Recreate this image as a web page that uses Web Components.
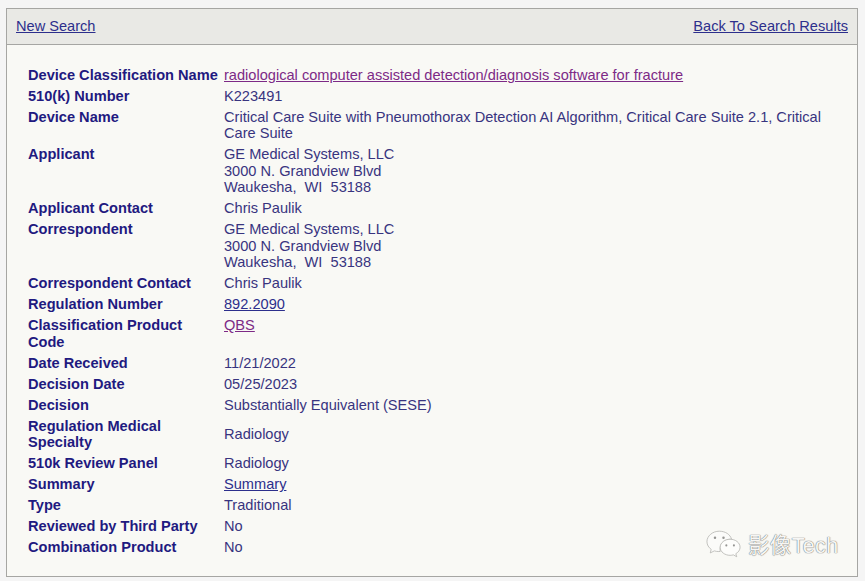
<!DOCTYPE html>
<html lang="en">
<head>
<meta charset="utf-8">
<title>510(k) Premarket Notification</title>
<style>
    html, body { margin: 0; height: 100%; }
    body {
        background: #f5f5f5;
        font-family: "Liberation Sans", Arial, sans-serif;
        color: #2e2a7e;
    }
</style>
</head>
<body>
<template id="result-panel-tpl">
    <style>
        :host {
            display: block;
            box-sizing: border-box;
            width: 852px;
            height: 569px;
            margin: 8px 0 0 6px;
            border: 1px solid #a6a6a3;
            background: #f9f9f5;
            position: relative;
        }
        .bar {
            display: flex;
            justify-content: space-between;
            align-items: center;
            box-sizing: border-box;
            height: 36px;
            padding: 0 9px 2px;
            background: #e9e9e5;
            border-bottom: 1px solid #a6a6a3;
            font-size: 14.6px;
        }
        .rows {
            display: flex;
            flex-direction: column;
            padding: 19.6px 21px 0 21px;
        }
    </style>
    <div class="bar">
        <slot name="left"></slot>
        <slot name="right"></slot>
    </div>
    <div class="rows"><slot></slot></div>
    <slot name="mark"></slot>
</template>

<template id="detail-row-tpl">
    <style>
        :host {
            display: grid;
            grid-template-columns: 196px 1fr;
            padding: 2.2px 0 2.3px;
            font-size: 14.6px;
            line-height: 16.5px;
            color: #2e2a7e;
        }
        :host([middle]) .value { align-self: center; }
        .label { font-weight: bold; color: #1f1a80; padding-right: 4px; }
        .value { color: #38347f; }
    </style>
    <div class="label"><slot name="label"></slot></div>
    <div class="value"><slot></slot></div>
</template>

<template id="plain-link-tpl">
    <style>
        :host { display: inline; }
        a { text-decoration: underline; color: #2d2f8c; }
        :host([visited]) a { color: #7d2a86; }
    </style>
    <a href="#"><slot></slot></a>
</template>

<template id="wechat-mark-tpl">
    <style>
        :host {
            position: absolute;
            left: 699px;
            bottom: 17px;
            display: flex;
            align-items: center;
            gap: 7px;
            font-family: "Liberation Sans", "Noto Sans CJK SC", sans-serif;
            font-size: 21.5px;
            color: #f6f6f4;
            text-shadow: 0 0 1px #707070, 0 0 1px #707070;
            letter-spacing: 0.35px;
        }
        svg { display: block; }
    </style>
    <svg width="35" height="29" viewBox="0 0 37 30">
        <path d="M14 2C7 2 1 7 1 13c0 3.500 1.800 6.200 4.500 8.200L4.500 25l4.300-2.200c1.500.5 3 .7 4.700.7.500 0 1 0 1.500-.1C13.500 15 20 10 27 10.500 25.700 5.500 20.500 2 14 2z" fill="#fbfbf9" stroke="#b0b0ad" stroke-width=".8"/>
        <path d="M36 19c0-5-5-8.500-10.500-8.500S15 14 15 19s5 8.500 10.500 8.500c1.200 0 2.300-.2 3.400-.5l3.600 2-1-3.200C34.300 24.200 36 21.800 36 19z" fill="#fdfdfb" stroke="#b0b0ad" stroke-width=".8"/>
        <circle cx="9.500" cy="9" r="1.300" fill="#959592"/>
        <circle cx="18.500" cy="9" r="1.300" fill="#959592"/>
        <circle cx="21.500" cy="17" r="1.100" fill="#959592"/>
        <circle cx="29.500" cy="17" r="1.100" fill="#959592"/>
    </svg>
    <span><slot></slot></span>
</template>

<result-panel>
    <plain-link slot="left">New Search</plain-link>
    <plain-link slot="right">Back To Search Results</plain-link>

    <detail-row><span slot="label">Device Classification Name</span><plain-link visited>radiological computer assisted detection/diagnosis software for fracture</plain-link></detail-row>
    <detail-row><span slot="label">510(k) Number</span>K223491</detail-row>
    <detail-row><span slot="label">Device Name</span>Critical Care Suite with Pneumothorax Detection AI Algorithm, Critical Care Suite 2.1, Critical Care Suite</detail-row>
    <detail-row><span slot="label">Applicant</span>GE Medical Systems, LLC<br>3000 N. Grandview Blvd<br>Waukesha,&nbsp; WI&nbsp; 53188</detail-row>
    <detail-row><span slot="label">Applicant Contact</span>Chris Paulik</detail-row>
    <detail-row><span slot="label">Correspondent</span>GE Medical Systems, LLC<br>3000 N. Grandview Blvd<br>Waukesha,&nbsp; WI&nbsp; 53188</detail-row>
    <detail-row><span slot="label">Correspondent Contact</span>Chris Paulik</detail-row>
    <detail-row><span slot="label">Regulation Number</span><plain-link>892.2090</plain-link></detail-row>
    <detail-row><span slot="label">Classification Product Code</span><plain-link visited>QBS</plain-link></detail-row>
    <detail-row><span slot="label">Date Received</span>11/21/2022</detail-row>
    <detail-row><span slot="label">Decision Date</span>05/25/2023</detail-row>
    <detail-row><span slot="label">Decision</span>Substantially Equivalent (SESE)</detail-row>
    <detail-row middle><span slot="label">Regulation Medical Specialty</span>Radiology</detail-row>
    <detail-row><span slot="label">510k Review Panel</span>Radiology</detail-row>
    <detail-row><span slot="label">Summary</span><plain-link>Summary</plain-link></detail-row>
    <detail-row><span slot="label">Type</span>Traditional</detail-row>
    <detail-row><span slot="label">Reviewed by Third Party</span>No</detail-row>
    <detail-row><span slot="label">Combination Product</span>No</detail-row>

    <wechat-mark slot="mark">影像Tech</wechat-mark>
</result-panel>

<script>
    // every element just clones its template into an open shadow root
    function defineFromTemplate(tag, tplId) {
        customElements.define(tag, class extends HTMLElement {
            constructor() {
                super();
                this.attachShadow({ mode: "open" });
                const tpl = document.getElementById(tplId);
                this.shadowRoot.appendChild(tpl.content.cloneNode(true));
            }
        });
    }

    defineFromTemplate("result-panel", "result-panel-tpl");
    defineFromTemplate("detail-row", "detail-row-tpl");
    defineFromTemplate("plain-link", "plain-link-tpl");
    defineFromTemplate("wechat-mark", "wechat-mark-tpl");
</script>
</body>
</html>
